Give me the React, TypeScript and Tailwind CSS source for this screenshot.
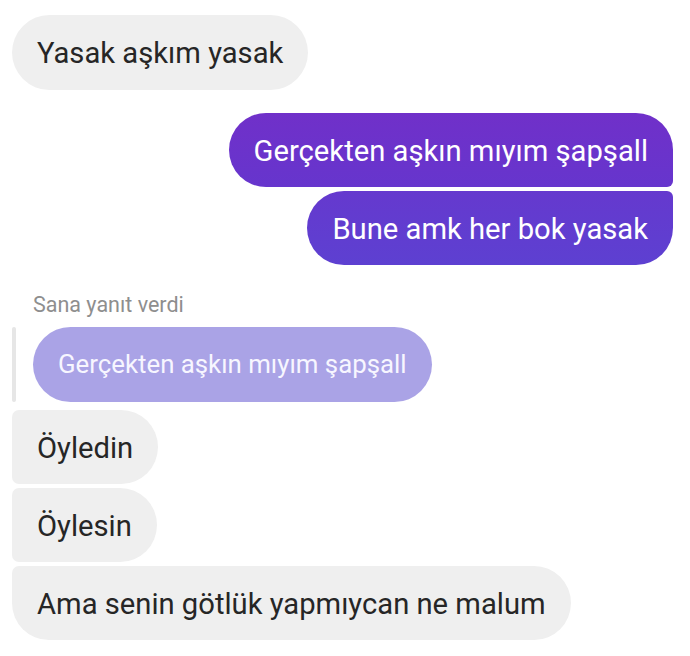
const font = { fontFamily: 'Roboto, "Noto Sans", sans-serif' }

function Theirs({ text, corners }: { text: string; corners: string }) {
  return (
    <div
      className={`self-start bg-[#efefef] text-[#262626] text-[29.2px] leading-[34px] px-[25px] pt-[21px] pb-[19px] ${corners}`}
    >
      {text}
    </div>
  )
}

function Mine({ text, corners, tone }: { text: string; corners: string; tone: string }) {
  return (
    <div
      className={`self-end text-white text-[29.2px] leading-[34px] px-[25px] pt-[21px] pb-[19px] ${corners} ${tone}`}
    >
      {text}
    </div>
  )
}

export default function App() {
  return (
    <div style={font} className="min-h-screen w-[690px] bg-white pt-[15px] pl-[12px] pr-[17px]">
      <div className="flex flex-col">
        <Theirs text="Yasak aşkım yasak" corners="rounded-[38px] h-[75px]" />

        <div className="mt-[23px] flex flex-col gap-[4px]">
          <Mine
            text="Gerçekten aşkın mıyım şapşall"
            corners="rounded-[37px] rounded-br-[6px]"
            tone="bg-gradient-to-b from-[#7030c9] to-[#6635cd]"
          />
          <Mine
            text="Bune amk her bok yasak"
            corners="rounded-[37px] rounded-tr-[6px]"
            tone="bg-gradient-to-b from-[#6539ce] to-[#5d40d1]"
          />
        </div>

        <div className="mt-[28px] pl-[21px] text-[21.5px] leading-[24px] text-[#8e8e8e]">
          Sana yanıt verdi
        </div>

        <div className="mt-[10px] flex items-stretch gap-[17px]">
          <div className="w-[4px] rounded-full bg-[#e6e6e6]" />
          <div className="rounded-[38px] bg-[#aaa3e6] text-[#f7f6ff] text-[25.8px] leading-[31px] px-[25px] py-[22px]">
            Gerçekten aşkın mıyım şapşall
          </div>
        </div>

        <div className="mt-[8px] flex flex-col gap-[4px]">
          <Theirs text="Öyledin" corners="rounded-[37px] rounded-l-[7px]" />
          <Theirs text="Öylesin" corners="rounded-[37px] rounded-l-[7px]" />
          <Theirs text="Ama senin götlük yapmıycan ne malum" corners="rounded-[37px] rounded-tl-[7px]" />
        </div>
      </div>
    </div>
  )
}
